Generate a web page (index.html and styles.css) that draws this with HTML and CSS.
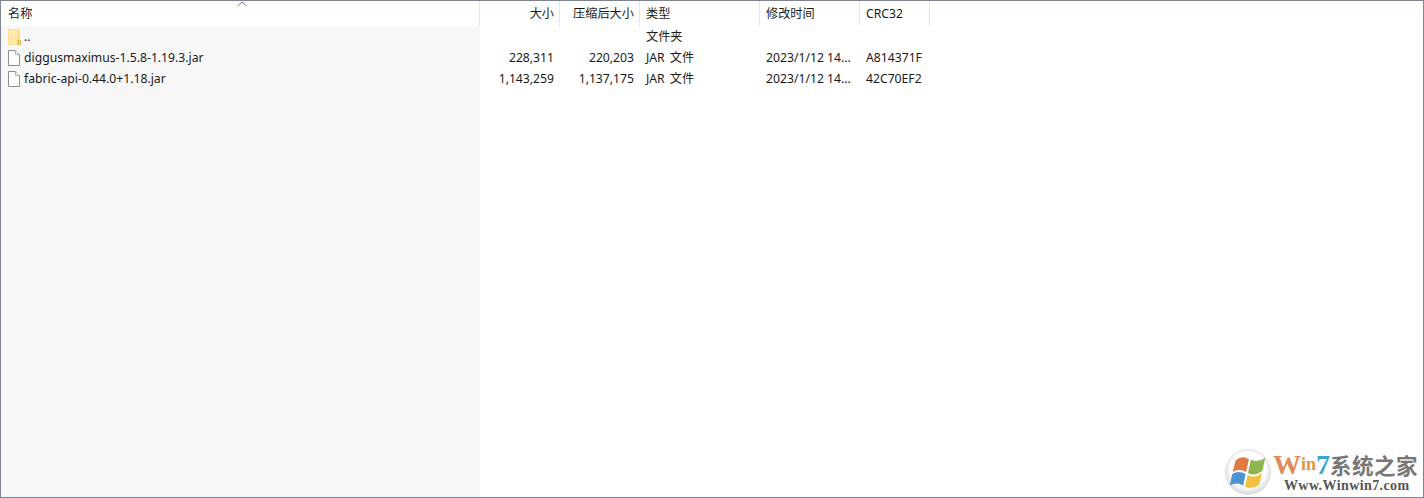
FILE: index.html
```html
<!DOCTYPE html>
<html lang="zh-CN">
<head>
<meta charset="utf-8">
<title>压缩包文件列表</title>
<link rel="stylesheet" href="styles.css">
</head>
<body>
<main class="window">
  <div class="row header">
    <div class="cell name">名称<svg class="sort" width="10" height="6" viewBox="0 0 10 6"><path d="M0.5 5 L5 1 L9.5 5" fill="none" stroke="#777" stroke-width="1"/></svg></div>
    <div class="cell size">大小</div>
    <div class="cell packed">压缩后大小</div>
    <div class="cell type">类型</div>
    <div class="cell modified">修改时间</div>
    <div class="cell crc">CRC32</div>
  </div>
  <div class="list">
    <div class="row">
      <div class="cell name"><svg class="icon" width="13" height="16" viewBox="0 0 13 16"><path d="M0 0H9.500L12 1.500V13H13V16H0Z" fill="#fcdf8a"/><path d="M1 1H9V15H1Z" fill="#fde9a8"/><path d="M10 11H13V16H9.500V12Z" fill="#e6b64c"/><path d="M11 12.500H12V15H11Z" fill="#fff3c8"/></svg><span>..</span></div>
      <div class="cell size"></div><div class="cell packed"></div>
      <div class="cell type">文件夹</div><div class="cell modified"></div><div class="cell crc"></div>
    </div>
    <div class="row">
      <div class="cell name"><svg class="icon" width="13" height="16" viewBox="0 0 13 16"><path d="M0.500 0.500H7.500L11.500 4.500V15.500H0.500Z" fill="#fff" stroke="#8f8f8f"/><path d="M7.500 0.500V4.500H11.500" fill="#f2f2f2" stroke="#b0b0b0"/></svg><span>diggusmaximus-1.5.8-1.19.3.jar</span></div>
      <div class="cell size">228,311</div><div class="cell packed">220,203</div>
      <div class="cell type">JAR 文件</div><div class="cell modified">2023/1/12 14...</div><div class="cell crc">A814371F</div>
    </div>
    <div class="row">
      <div class="cell name"><svg class="icon" width="13" height="16" viewBox="0 0 13 16"><path d="M0.500 0.500H7.500L11.500 4.500V15.500H0.500Z" fill="#fff" stroke="#8f8f8f"/><path d="M7.500 0.500V4.500H11.500" fill="#f2f2f2" stroke="#b0b0b0"/></svg><span>fabric-api-0.44.0+1.18.jar</span></div>
      <div class="cell size">1,143,259</div><div class="cell packed">1,137,175</div>
      <div class="cell type">JAR 文件</div><div class="cell modified">2023/1/12 14...</div><div class="cell crc">42C70EF2</div>
    </div>
  </div>
  <aside class="mark">
    <svg class="mark-logo" width="46" height="48" viewBox="0 0 48 50">
      <defs>
        <radialGradient id="orb" cx="0.5" cy="0.45" r="0.55">
          <stop offset="0.7" stop-color="#ffffff"/>
          <stop offset="1" stop-color="#d3d7d9"/>
        </radialGradient>
      </defs>
      <circle cx="24" cy="25" r="23.500" fill="url(#orb)" stroke="#dfe2e3"/>
      <path d="M11 13 Q18 7 25 12 L22 25 Q15 21 8 25Z" fill="#e07a45"/>
      <path d="M27 12 Q34 16 42 10 L39 24 Q31 30 24 26Z" fill="#8db64c"/>
      <path d="M7.500 27 Q14 23 21.500 27 L19 39 Q12 35 5 39Z" fill="#4d93d4"/>
      <path d="M23.500 28 Q31 32 38.500 26 L36 38 Q28 44 21 40Z" fill="#f3c142"/>
    </svg>
    <div class="mark-text">
      <div class="mark-title"><span class="w">W</span><span class="i">in</span><span class="s">7</span><span class="cn">系统之家</span></div>
      <div class="mark-url">Www.Winwin7.com</div>
    </div>
  </aside>
</main>
</body>
</html>
```
FILE: styles.css
```css
* { box-sizing: border-box; }
html, body { margin: 0; height: 100%; }
body {
  background: #fff;
  color: #1a1a1a;
  font-family: "Noto Sans", "Noto Sans CJK SC", sans-serif;
  font-size: 12.2px;
  overflow: hidden;
}
.window {
  position: relative;
  height: 498px;
  border: 1px solid #7f8590;
  display: flex;
  flex-direction: column;
}
.row {
  display: grid;
  grid-template-columns: 479px 80px 80px 120px 100px 70px;
  height: 21px;
  align-items: center;
}
.header {
  height: 25px;
  flex: none;
}
.header .cell {
  position: relative;
  height: 25px;
  line-height: 25px;
  padding-right: 5px;
  border-right: 1px solid #e5e5e5;
}
.cell {
  padding: 0 6px;
  line-height: 20px;
  white-space: nowrap;
  overflow: hidden;
}
.size, .packed { text-align: right; }
.type { word-spacing: 2px; }
.sort { position: absolute; left: 236px; top: 0; }
.list {
  flex: 1;
  background: linear-gradient(to right, #f7f7f7 479px, #fff 479px);
}
.row .name { display: flex; align-items: center; padding-left: 7px; }
.header .name { display: block; }
.icon { flex: none; margin-right: 3px; }
.mark {
  position: absolute;
  right: 5px;
  bottom: 1px;
  display: flex;
  align-items: center;
  gap: 2px;
  height: 48px;
}
.mark-title {
  display: flex;
  align-items: center;
  height: 27px;
  font-family: "Liberation Serif", serif;
  font-weight: 700;
  font-size: 28px;
  line-height: 27px;
}
.mark-title .w { color: #e08a5c; }
.mark-title .i { color: #e0983c; font-size: 18px; }
.mark-title .s { color: #3aa6d8; }
.mark-title .cn {
  color: #777;
  font-family: "Noto Sans CJK SC", sans-serif;
  font-size: 21.5px;
  letter-spacing: 0.5px;
}
.mark-url {
  font-family: "Liberation Serif", serif;
  font-weight: 700;
  font-size: 14px;
  line-height: 16px;
  color: #555;
  letter-spacing: 0.4px;
  padding-left: 11px;
}
```
